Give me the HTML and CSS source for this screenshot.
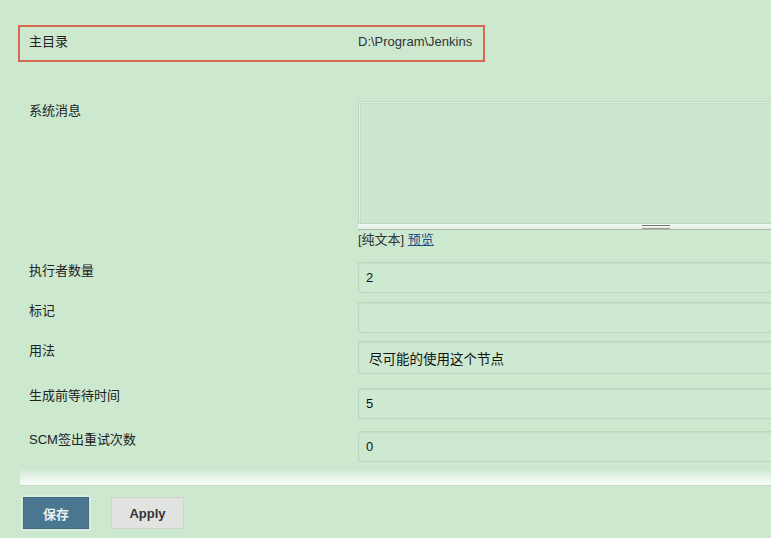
FILE: index.html
```html
<!DOCTYPE html>
<html lang="zh-CN">
<head>
<meta charset="utf-8">
<title>Jenkins 配置</title>
<link rel="stylesheet" href="styles.css">
</head>
<body>
<div class="page">
  <div class="home-row">
    <span class="home-label">主目录</span>
    <span class="home-value">D:\Program\Jenkins</span>
  </div>

  <div class="form">
    <div class="row row-msg">
      <div class="label">系统消息</div>
      <div class="field">
        <div class="textarea"></div>
        <div class="grip"><span class="grip-handle"></span></div>
        <div class="syntax">[纯文本] <a href="#" class="preview">预览</a></div>
      </div>
    </div>

    <div class="row row-exec">
      <div class="label">执行者数量</div>
      <div class="field"><div class="input">2</div></div>
    </div>

    <div class="row row-tag">
      <div class="label">标记</div>
      <div class="field"><div class="input"></div></div>
    </div>

    <div class="row row-usage">
      <div class="label">用法</div>
      <div class="field"><div class="input select">尽可能的使用这个节点</div></div>
    </div>

    <div class="row row-wait">
      <div class="label">生成前等待时间</div>
      <div class="field"><div class="input">5</div></div>
    </div>

    <div class="row row-scm">
      <div class="label">SCM签出重试次数</div>
      <div class="field"><div class="input">0</div></div>
    </div>
  </div>

  <div class="bottom-strip"></div>

  <div class="buttons">
    <button class="btn btn-save">保存</button>
    <button class="btn btn-apply">Apply</button>
  </div>
</div>
</body>
</html>
```

FILE: styles.css
```css
html, body {
  margin: 0;
  padding: 0;
  background: #cce8cf;
  overflow: hidden;
}
body {
  width: 771px;
  height: 538px;
  font-family: "Liberation Sans", "Noto Sans CJK SC", sans-serif;
  font-size: 13px;
  color: #222;
}
.page {
  padding-top: 25px;
}
.home-row {
  margin-left: 18px;
  width: 463px;
  height: 33px;
  border: 2px solid #d8684f;
  display: flex;
  align-items: flex-start;
  line-height: 15px;
}
.home-label,
.home-value {
  padding-top: 7px;
}
.home-label {
  width: 338px;
  padding-left: 9px;
  box-sizing: border-box;
}
.home-value {
  color: #333;
}
.form {
  margin-top: 39px;
  padding-left: 29px;
}
.row {
  display: grid;
  grid-template-columns: 329px 440px;
}
.label {
  line-height: 15px;
}
.row-msg .label { padding-top: 2px; }
.textarea {
  height: 121px;
  border: 1px solid #bcd6bf;
  border-right: none;
  box-shadow: inset 1px 1px 0 #e0efe2, inset 2px 2px 0 #c3dcc6;
  background: #cbe7cf;
}
.grip {
  height: 5px;
  background: linear-gradient(#f2f7f2, #e4ede4);
  border-bottom: 1px solid #a9b6a9;
  position: relative;
}
.grip-handle {
  position: absolute;
  left: 284px;
  top: 1px;
  width: 28px;
  height: 2px;
  border-top: 1px solid #777;
  border-bottom: 1px solid #999;
}
.syntax {
  margin-top: 2px;
  line-height: 16px;
  color: #333;
}
.preview {
  color: #1b4f86;
  text-decoration: underline;
}
.input {
  box-sizing: border-box;
  height: 31px;
  border: 1px solid #bcd7c0;
  border-right: none;
  border-radius: 3px 0 0 3px;
  box-shadow: inset 0 1px 2px rgba(0,0,0,0.06);
  background: #cde9d1;
  padding-left: 7px;
  display: flex;
  align-items: center;
  color: #111;
}
.select {
  height: 33px;
  padding-left: 10px;
  font-size: 13.5px;
}
.row-exec { margin-top: 14px; }
.row-exec .label { padding-top: 1px; }
.row-tag { margin-top: 9px; }
.row-tag .label { padding-top: 1px; }
.row-usage { margin-top: 8px; }
.row-usage .label { padding-top: 2px; }
.row-wait { margin-top: 14px; }
.row-wait .label { padding-top: 0; }
.row-scm { margin-top: 12px; }
.row-scm .label { padding-top: 1px; }
.bottom-strip {
  margin-top: 8px;
  margin-left: 20px;
  height: 15px;
  background: linear-gradient(#d3ead5, #fafdfa);
  box-shadow: 0 1px 1px #c0d9c3;
}
.buttons {
  margin-top: 12px;
  padding-left: 23px;
  display: flex;
  gap: 22px;
}
.btn {
  height: 32px;
  font-family: "Liberation Sans", "Noto Sans CJK SC", sans-serif;
  font-size: 13px;
  font-weight: bold;
  cursor: pointer;
}
.btn-save {
  width: 66px;
  background: #4b7690;
  color: #e8f0f3;
  border: 1px solid #3f6a82;
  box-shadow: 0 0 0 2px #d9ece0;
}
.btn-apply {
  width: 73px;
  background: #e1e3e1;
  color: #333;
  border: 1px solid #cfd4cf;
}
```
